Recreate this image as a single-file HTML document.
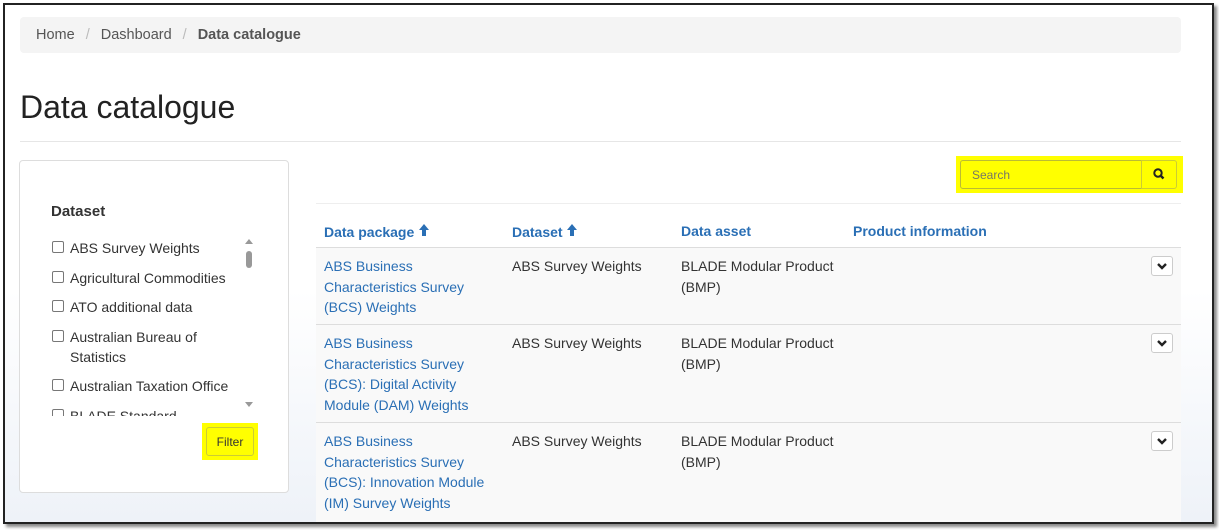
<!DOCTYPE html>
<html><head><style>
*{box-sizing:border-box;margin:0;padding:0}
body{width:1219px;height:530px;background:#fff;font-family:"Liberation Sans",sans-serif;position:relative;overflow:hidden;color:#333}
.frame{position:absolute;left:3px;top:3px;width:1211px;height:521px;border:2px solid #222;box-shadow:3px 3px 3px #888;background:linear-gradient(180deg,#fff 0%,#fff 55%,#eef2f8 100%);overflow:hidden}
.w{position:absolute;left:-2px;top:-1px;width:1211px;height:530px}
.a{position:absolute}
.bc{left:17px;top:13px;width:1161px;height:36px;background:#f4f4f4;border-radius:4px;font-size:14.5px;color:#555;line-height:36px;padding-left:16px}
.bc span.s{color:#bbb;margin:0 11px}
h1{position:absolute;left:17px;top:85px;font-size:32px;font-weight:normal;color:#222}
.hr{left:17px;top:137px;width:1161px;height:1px;background:#e6e6e6}
.side{left:17px;top:156px;width:270px;height:333px;border:1px solid #ddd;border-radius:4px;background:#fff}
.side h3{position:absolute;left:31px;top:42px;font-size:15px;color:#333}
.list{position:absolute;left:32px;top:77px;width:190px;height:178px;overflow:hidden;font-size:14px;line-height:20px;white-space:nowrap}
.list div{position:relative;padding-left:18px;margin-bottom:9.5px}
.list div.wr{white-space:normal;width:150px}
.list div:before{content:"";position:absolute;left:0;top:3px;width:10px;height:10px;border:1px solid #777;border-radius:2px}
.sb{position:absolute;left:222px;top:72px;width:14px;height:180px}
.filter{position:absolute;left:182px;top:262px;width:56px;height:37px;background:#ff0;padding:4px}
.filter div{border:1px solid #cc3;border-radius:3px;height:100%;font-size:12px;text-align:center;line-height:28px;color:#333}
.search{left:953px;top:152px;width:227px;height:37px;background:#ff0;padding:4px}
.search .in{position:absolute;left:4px;top:4px;width:182px;height:29px;border:1px solid #bb3;border-radius:3px 0 0 3px;font-size:12px;color:#776;line-height:28px;padding-left:11px}
.search .bt{position:absolute;left:185px;top:4px;width:36px;height:29px;border:1px solid #cc3;border-radius:0 3px 3px 0}
.tline{left:313px;top:199px;width:865px;height:1px;background:#eee}
.th{top:219px;font-size:14px;font-weight:bold;color:#2a6fb5}
.row{left:313px;width:865px;background:#f9f9f9;border-top:1px solid #ddd}
.cell{position:absolute;font-size:14px;line-height:20.5px}
.lnk{color:#2a6fb5;left:8px;width:175px}
.c2{left:196px;color:#333}
.c3{left:365px;width:170px;color:#333}
.dd{position:absolute;right:8px;top:8px;width:22px;height:20px;border:1px solid #ccc;border-radius:3px;background:#fff}
</style></head><body>
<div class="frame"><div class="w">
<div class="a bc">Home<span class="s">/</span>Dashboard<span class="s">/</span><b>Data catalogue</b></div>
<h1>Data catalogue</h1>
<div class="a hr"></div>
<div class="a side" style="left:16px">
<h3>Dataset</h3>
<div class="list">
<div>ABS Survey Weights</div>
<div>Agricultural Commodities</div>
<div>ATO additional data</div>
<div class="wr">Australian Bureau of Statistics</div>
<div>Australian Taxation Office</div>
<div>BLADE Standard</div>
</div>
<svg class="sb" viewBox="0 0 14 180"><path d="M3 11 L7 6 L11 11Z" fill="#999"/><rect x="4" y="18" width="6" height="17" rx="3" fill="#999"/><path d="M3 169 L7 174 L11 169Z" fill="#999"/></svg>
<div class="filter"><div>Filter</div></div>
</div>
<div class="a search"><div class="in">Search</div><div class="bt"><svg width="34" height="27" viewBox="0 0 34 27"><circle cx="16" cy="12" r="3.7" fill="none" stroke="#222" stroke-width="2"/><path d="M18.6 14.6 L21.5 17.5" stroke="#222" stroke-width="2.4"/></svg></div></div>
<div class="a tline"></div>
<div class="a th" style="left:321px">Data package <svg width="12" height="14" viewBox="0 0 12 14"><path d="M6 1 L11 7 H8 V13 H4 V7 H1Z" fill="#2a6fb5"/></svg></div>
<div class="a th" style="left:509px">Dataset <svg width="12" height="14" viewBox="0 0 12 14"><path d="M6 1 L11 7 H8 V13 H4 V7 H1Z" fill="#2a6fb5"/></svg></div>
<div class="a th" style="left:678px">Data asset</div>
<div class="a th" style="left:850px">Product information</div>
<div class="a row" style="top:243px;height:77px"><div class="cell lnk" style="top:8px">ABS Business Characteristics Survey (BCS) Weights</div><div class="cell c2" style="top:8px">ABS Survey Weights</div><div class="cell c3" style="top:8px">BLADE Modular Product (BMP)</div><div class="dd"><svg width="20" height="18" viewBox="0 0 20 18"><path d="M6 7 L10 11 L14 7" fill="none" stroke="#222" stroke-width="2.4"/></svg></div></div>
<div class="a row" style="top:320px;height:98px"><div class="cell lnk" style="top:8px">ABS Business Characteristics Survey (BCS): Digital Activity Module (DAM) Weights</div><div class="cell c2" style="top:8px">ABS Survey Weights</div><div class="cell c3" style="top:8px">BLADE Modular Product (BMP)</div><div class="dd"><svg width="20" height="18" viewBox="0 0 20 18"><path d="M6 7 L10 11 L14 7" fill="none" stroke="#222" stroke-width="2.4"/></svg></div></div>
<div class="a row" style="top:418px;height:112px"><div class="cell lnk" style="top:8px">ABS Business Characteristics Survey (BCS): Innovation Module (IM) Survey Weights</div><div class="cell c2" style="top:8px">ABS Survey Weights</div><div class="cell c3" style="top:8px">BLADE Modular Product (BMP)</div><div class="dd"><svg width="20" height="18" viewBox="0 0 20 18"><path d="M6 7 L10 11 L14 7" fill="none" stroke="#222" stroke-width="2.4"/></svg></div></div>
</div></div>
</body></html>
